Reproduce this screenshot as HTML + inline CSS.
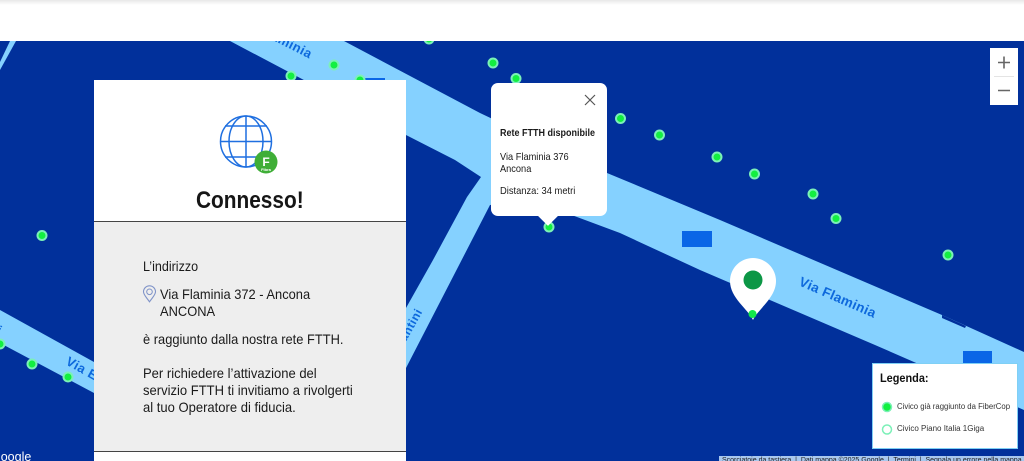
<!DOCTYPE html>
<html><head><meta charset="utf-8"><style>
html,body{margin:0;padding:0;width:1024px;height:461px;overflow:hidden;background:#fff}
*{box-sizing:border-box}
body{position:relative;font-family:"Liberation Sans",sans-serif;color:#1a1a1a}
.t{position:absolute;white-space:nowrap;line-height:1;transform-origin:left center}
.abs{position:absolute}
</style></head><body>
<div class="abs" style="left:0;top:0;width:1024px;height:5px;background:linear-gradient(#e6e6e6,#fff)"></div>
<svg class="abs" style="left:0;top:41px" width="1024" height="420" viewBox="0 41 1024 420">
<rect x="0" y="41" width="1024" height="420" fill="#01309b"/>
<g fill="#85d1ff">
<polygon points="0,70 0,62 10,41 16,41"/>
<polygon points="230,41 344,41 480,113 607,173 720,220 942,315 1024,352 1024,410 875,345 700,270 620,233 577,217 530,200 490,205 406,368 406,308 433,260 467,197 481,177 455,160 406,135 302,79"/>
<polygon points="0,310 94,362 94,393 0,343"/>
</g>
<path d="M942 315l0 3 23 10 1-2z" fill="#01309b"/>
<g fill="#0a66e6">
<rect x="682" y="231" width="30" height="16"/>
<rect x="963" y="351" width="29" height="13"/>
<rect x="365" y="78" width="20" height="4"/>
</g>
<g font-family="Liberation Sans,sans-serif" font-weight="700" font-size="13" fill="#0d68dc" letter-spacing=".5">
<text transform="translate(798 285) rotate(23.5)" font-size="13.5" letter-spacing=".35">Via Flaminia</text>
<text transform="translate(259 33) rotate(27)">Flaminia</text>
<text transform="translate(65 364) rotate(29)">Via Er</text>
<text transform="translate(-12 329) rotate(29)">ni</text>
<text transform="translate(402 349) rotate(-61)" font-size="12">Fantini</text>
</g>
<g fill="#12f040" stroke="#7cf0b8" stroke-width="2">
<circle cx="42" cy="235.500" r="4.500"/><circle cx="32" cy="364" r="4.500"/><circle cx="68" cy="377" r="4.500"/>
<circle cx="0" cy="344" r="4.500"/><circle cx="291" cy="76" r="4.500"/><circle cx="334" cy="65" r="4.500"/>
<circle cx="360" cy="80" r="4.500"/><circle cx="429" cy="39" r="4.500"/><circle cx="493" cy="63" r="4.500"/>
<circle cx="516" cy="78.500" r="4.500"/><circle cx="620.500" cy="118.500" r="4.500"/><circle cx="659.500" cy="135" r="4.500"/>
<circle cx="717" cy="157" r="4.500"/><circle cx="754.500" cy="174" r="4.500"/><circle cx="813" cy="194" r="4.500"/>
<circle cx="836" cy="218.500" r="4.500"/><circle cx="948" cy="255" r="4.500"/><circle cx="549" cy="227" r="4.500"/>
</g>
<path d="M753 320 C748 309 730 298 730 281 A23 23 0 0 1 776 281 C776 298 758 309 753 320Z" fill="#fff"/>
<circle cx="753" cy="280" r="9.500" fill="#0c9746"/>
<circle cx="752.500" cy="314" r="4" fill="#12e84a"/>
</svg>

<div class="abs" style="left:0;top:0;width:1024px;height:41px;background:linear-gradient(#e8e8e8,#fff 5px)"></div>

<div class="abs" style="left:94px;top:80px;width:312px;height:381px;background:#fff"></div>
<div class="abs" style="left:94px;top:221px;width:312px;height:231px;background:#eee;border-top:1px solid #444;border-bottom:1px solid #444"></div>
<svg class="abs" style="left:215px;top:112px" width="66" height="64" viewBox="0 0 66 64">
<g fill="none" stroke="#1f6fe0" stroke-width="1.500">
<circle cx="31" cy="29.500" r="25.500"/>
<ellipse cx="31" cy="29.500" rx="17" ry="25.500"/>
<path d="M31 4V55M5.500 29.500H56.500M10 14H52M10 45H52"/>
</g>
<circle cx="51" cy="50" r="11.500" fill="#3fae37"/>
<text x="51" y="54" font-size="12" font-weight="700" fill="#fff" text-anchor="middle" font-family="Liberation Sans,sans-serif">F</text>
<text x="51" y="59" font-size="4" font-weight="700" fill="#fff" text-anchor="middle" font-family="Liberation Sans,sans-serif">Fibra</text>
</svg>
<div class="t" style="left:196px;top:189px;font-size:24px;font-weight:700;color:#161616;transform:scaleX(.868)">Connesso!</div>

<div class="t" style="left:143px;top:260px;font-size:13.500px;transform:scaleX(.93)">L’indirizzo</div>
<svg class="abs" style="left:142px;top:285px" width="15" height="18" viewBox="0 0 15 18"><path d="M7.500 16.800C5 13 1.500 10 1.500 6.800a6 6 0 0 1 12 0C13.500 10 10 13 7.500 16.800Z" fill="none" stroke="#7f93c8" stroke-width="1.100"/><circle cx="7.500" cy="6.800" r="2.800" fill="none" stroke="#7f93c8" stroke-width="1"/></svg>
<div class="t" style="left:160px;top:287px;font-size:14px;transform:scaleX(.92)">Via Flaminia 372 - Ancona</div>
<div class="t" style="left:160px;top:304px;font-size:14px;transform:scaleX(.92)">ANCONA</div>
<div class="t" style="left:143px;top:332px;font-size:14px;transform:scaleX(.92)">è raggiunto dalla nostra rete FTTH.</div>
<div class="t" style="left:143px;top:366px;font-size:14px;transform:scaleX(.93)">Per richiedere l’attivazione del</div>
<div class="t" style="left:143px;top:383px;font-size:14px;transform:scaleX(.93)">servizio FTTH ti invitiamo a rivolgerti</div>
<div class="t" style="left:143px;top:400px;font-size:14px;transform:scaleX(.93)">al tuo Operatore di fiducia.</div>

<div class="abs" style="left:491px;top:83px;width:116px;height:133px;background:#fff;border-radius:7px"></div>
<div class="abs" style="left:541px;top:209px;width:14px;height:14px;background:#fff;transform:rotate(45deg)"></div>
<svg class="abs" style="left:584px;top:94px" width="12" height="12" viewBox="0 0 12 12"><path d="M1 1L11 11M11 1L1 11" stroke="#555" stroke-width="1.200"/></svg>
<div class="t" style="left:500px;top:129px;font-size:10px;font-weight:700;transform:scaleX(.9)">Rete FTTH disponibile</div>
<div class="t" style="left:500px;top:152px;font-size:10.500px;transform:scaleX(.88)">Via Flaminia 376</div>
<div class="t" style="left:500px;top:164px;font-size:10.500px;transform:scaleX(.88)">Ancona</div>
<div class="t" style="left:500px;top:186px;font-size:10.500px;transform:scaleX(.89)">Distanza: 34 metri</div>

<div class="abs" style="left:990px;top:48px;width:28px;height:57px;background:#fff"></div>
<div class="abs" style="left:994px;top:76px;width:20px;height:1px;background:#e4e4e4"></div>
<svg class="abs" style="left:990px;top:48px" width="28" height="57"><path d="M8 14.500H20M14 8.500V20.500M8 42.500H20" stroke="#666" stroke-width="1.600"/></svg>

<div class="abs" style="left:872px;top:363px;width:146px;height:86px;background:#fff;border:1px solid #7fd0f5"></div>
<div class="t" style="left:880px;top:372px;font-size:12px;font-weight:700;color:#111;transform:scaleX(.91)">Legenda:</div>
<svg class="abs" style="left:878px;top:400px" width="20" height="36"><circle cx="9" cy="7" r="4.500" fill="#12f040" stroke="#7cf0b8" stroke-width="1.500"/><circle cx="9" cy="29.500" r="4.500" fill="#fff" stroke="#7cf0b8" stroke-width="1.500"/></svg>
<div class="t" style="left:897px;top:402.500px;font-size:8px;color:#333;transform:scaleX(.97)">Civico già raggiunto da FiberCop</div>
<div class="t" style="left:897px;top:425px;font-size:8px;color:#333">Civico Piano Italia 1Giga</div>

<div class="t" style="left:-9px;top:451px;font-size:12.500px;color:#fff">Google</div>
<div class="abs" style="left:719px;top:456px;width:305px;height:5px;background:#a9c8ee;overflow:hidden;font-size:7px;line-height:10px;white-space:nowrap;color:#222;padding-left:3px">Scorciatoie da tastiera &nbsp;|&nbsp; Dati mappa ©2025 Google &nbsp;|&nbsp; Termini &nbsp;|&nbsp; Segnala un errore nella mappa</div>
</body></html>
